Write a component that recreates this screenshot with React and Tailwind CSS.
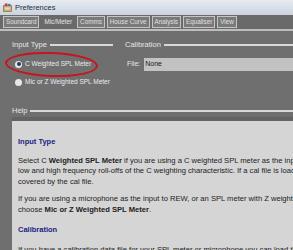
import React from 'react';

const tabs = ['Soundcard', 'Mic/Meter', 'Comms', 'House Curve', 'Analysis', 'Equaliser', 'View'];

const GroupTitle = ({ label, className = '' }) => (
  <div className={`flex items-center gap-[3px] h-[12px] ${className}`}>
    <span className="text-[7.5px] leading-[12px] text-[#e6e6e6] whitespace-nowrap">{label}</span>
    <div className="flex-1 h-[2px] bg-[#d8d8d8]" />
  </div>
);

const Radio = ({ checked, label }) => (
  <div className="flex items-center gap-[3px] h-[14px]">
    <div className="w-[7px] h-[7px] rounded-full bg-[#e8e8e8] flex items-center justify-center">
      {checked && <div className="w-[4px] h-[4px] rounded-full bg-[#1f3f4f]" />}
    </div>
    <span className="text-[6.5px] leading-[12px] text-[#ececec] whitespace-nowrap">{label}</span>
  </div>
);

export default function App() {
  return (
    <div className="w-[293px] h-[250px] overflow-hidden bg-[#6f6f6f] font-['Liberation_Sans',Arial,sans-serif] flex flex-col">
      {/* title bar */}
      <div className="h-[15px] shrink-0 flex items-center gap-[3px] pl-[3px] bg-gradient-to-b from-[#e8ecf1] to-[#cbd3de]">
        <svg width="9" height="9" viewBox="0 0 10 10">
          <rect x="0.5" y="3" width="9" height="6.5" fill="#c9b48a" stroke="#7a6a4a" strokeWidth="0.8" />
          <rect x="2" y="0.5" width="3" height="3" fill="#d04030" />
          <rect x="5.5" y="1" width="3" height="2.5" fill="#4a7ad0" />
          <rect x="2.5" y="5" width="5" height="2" fill="#f0e0b0" />
        </svg>
        <span className="text-[7.5px] leading-[12px] text-[#203040]">Preferences</span>
      </div>

      {/* tab strip */}
      <div className="h-[16px] shrink-0 flex items-end gap-[2px] pl-[3px] pb-[1px] bg-[#6a6a6a] border-b-2 border-[#bdbdbd]">
        {tabs.map((t) =>
          t === 'Mic/Meter' ? (
            <div key={t} className="h-[13px] px-[3px] flex items-center text-[6.3px] text-[#e4e4e4] whitespace-nowrap">
              {t}
            </div>
          ) : (
            <div
              key={t}
              className="h-[12px] px-[2px] flex items-center border border-[#c4c4c4] bg-[#7a7a7a] text-[6.3px] text-[#e0e0e0] whitespace-nowrap"
            >
              {t}
            </div>
          )
        )}
      </div>

      {/* input type + calibration */}
      <div className="relative flex pt-[8px] pl-[12px]">
        <div className="w-[101px] flex flex-col">
          <GroupTitle label="Input Type" />
          <div className="flex flex-col gap-[4px] pt-[6px] pl-[3px]">
            <Radio checked label="C Weighted SPL Meter" />
            <Radio label="Mic or Z Weighted SPL Meter" />
          </div>
        </div>
        <div className="flex-1 flex flex-col pl-[12px]">
          <GroupTitle label="Calibration" />
          <div className="flex items-center gap-[4px] pt-[7px] pl-[2px]">
            <span className="text-[7px] text-[#e6e6e6]">File:</span>
            <div className="flex-1 h-[13px] bg-[#c2c2c2] flex items-center pl-[1px] text-[7px] text-[#202020]">
              None
            </div>
          </div>
        </div>
        <div className="absolute left-[5px] top-[21px] w-[93px] h-[25px] rounded-[50%] border-2 border-[#c8141e] rotate-[2deg]" />
      </div>

      {/* help */}
      <div className="flex flex-col pl-[12px] pt-[16px] flex-1 min-h-0">
        <GroupTitle label="Help" />
        <div className="h-[4px] bg-[#636363]" />
        <div className="flex-1 bg-[#d5d5d5] pl-[6px] pt-[16px] text-[7.6px] leading-[10.5px] text-[#1c1c1c] whitespace-nowrap overflow-hidden">
          <div className="font-bold text-[#1c1c82] text-[7.5px]">Input Type</div>
          <div className="pt-[8px]">
            <p>
              Select C <b>Weighted SPL Meter</b> if you are using a C weighted SPL meter as the input to REW. This will compensate for the
            </p>
            <p>low and high frequency roll-offs of the C weighting characteristic. If a cal file is loaded it should be</p>
            <p>covered by the cal file.</p>
          </div>
          <div className="pt-[7px]">
            <p>If you are using a microphone as the input to REW, or an SPL meter with Z weighting</p>
            <p>
              choose <b>Mic or Z Weighted SPL Meter</b>.
            </p>
          </div>
          <div className="pt-[10px] font-bold text-[#1c1c82] text-[7.5px]">Calibration</div>
          <div className="pt-[9px]">
            <p>If you have a calibration data file for your SPL meter or microphone you can load the</p>
          </div>
        </div>
      </div>
    </div>
  );
}
